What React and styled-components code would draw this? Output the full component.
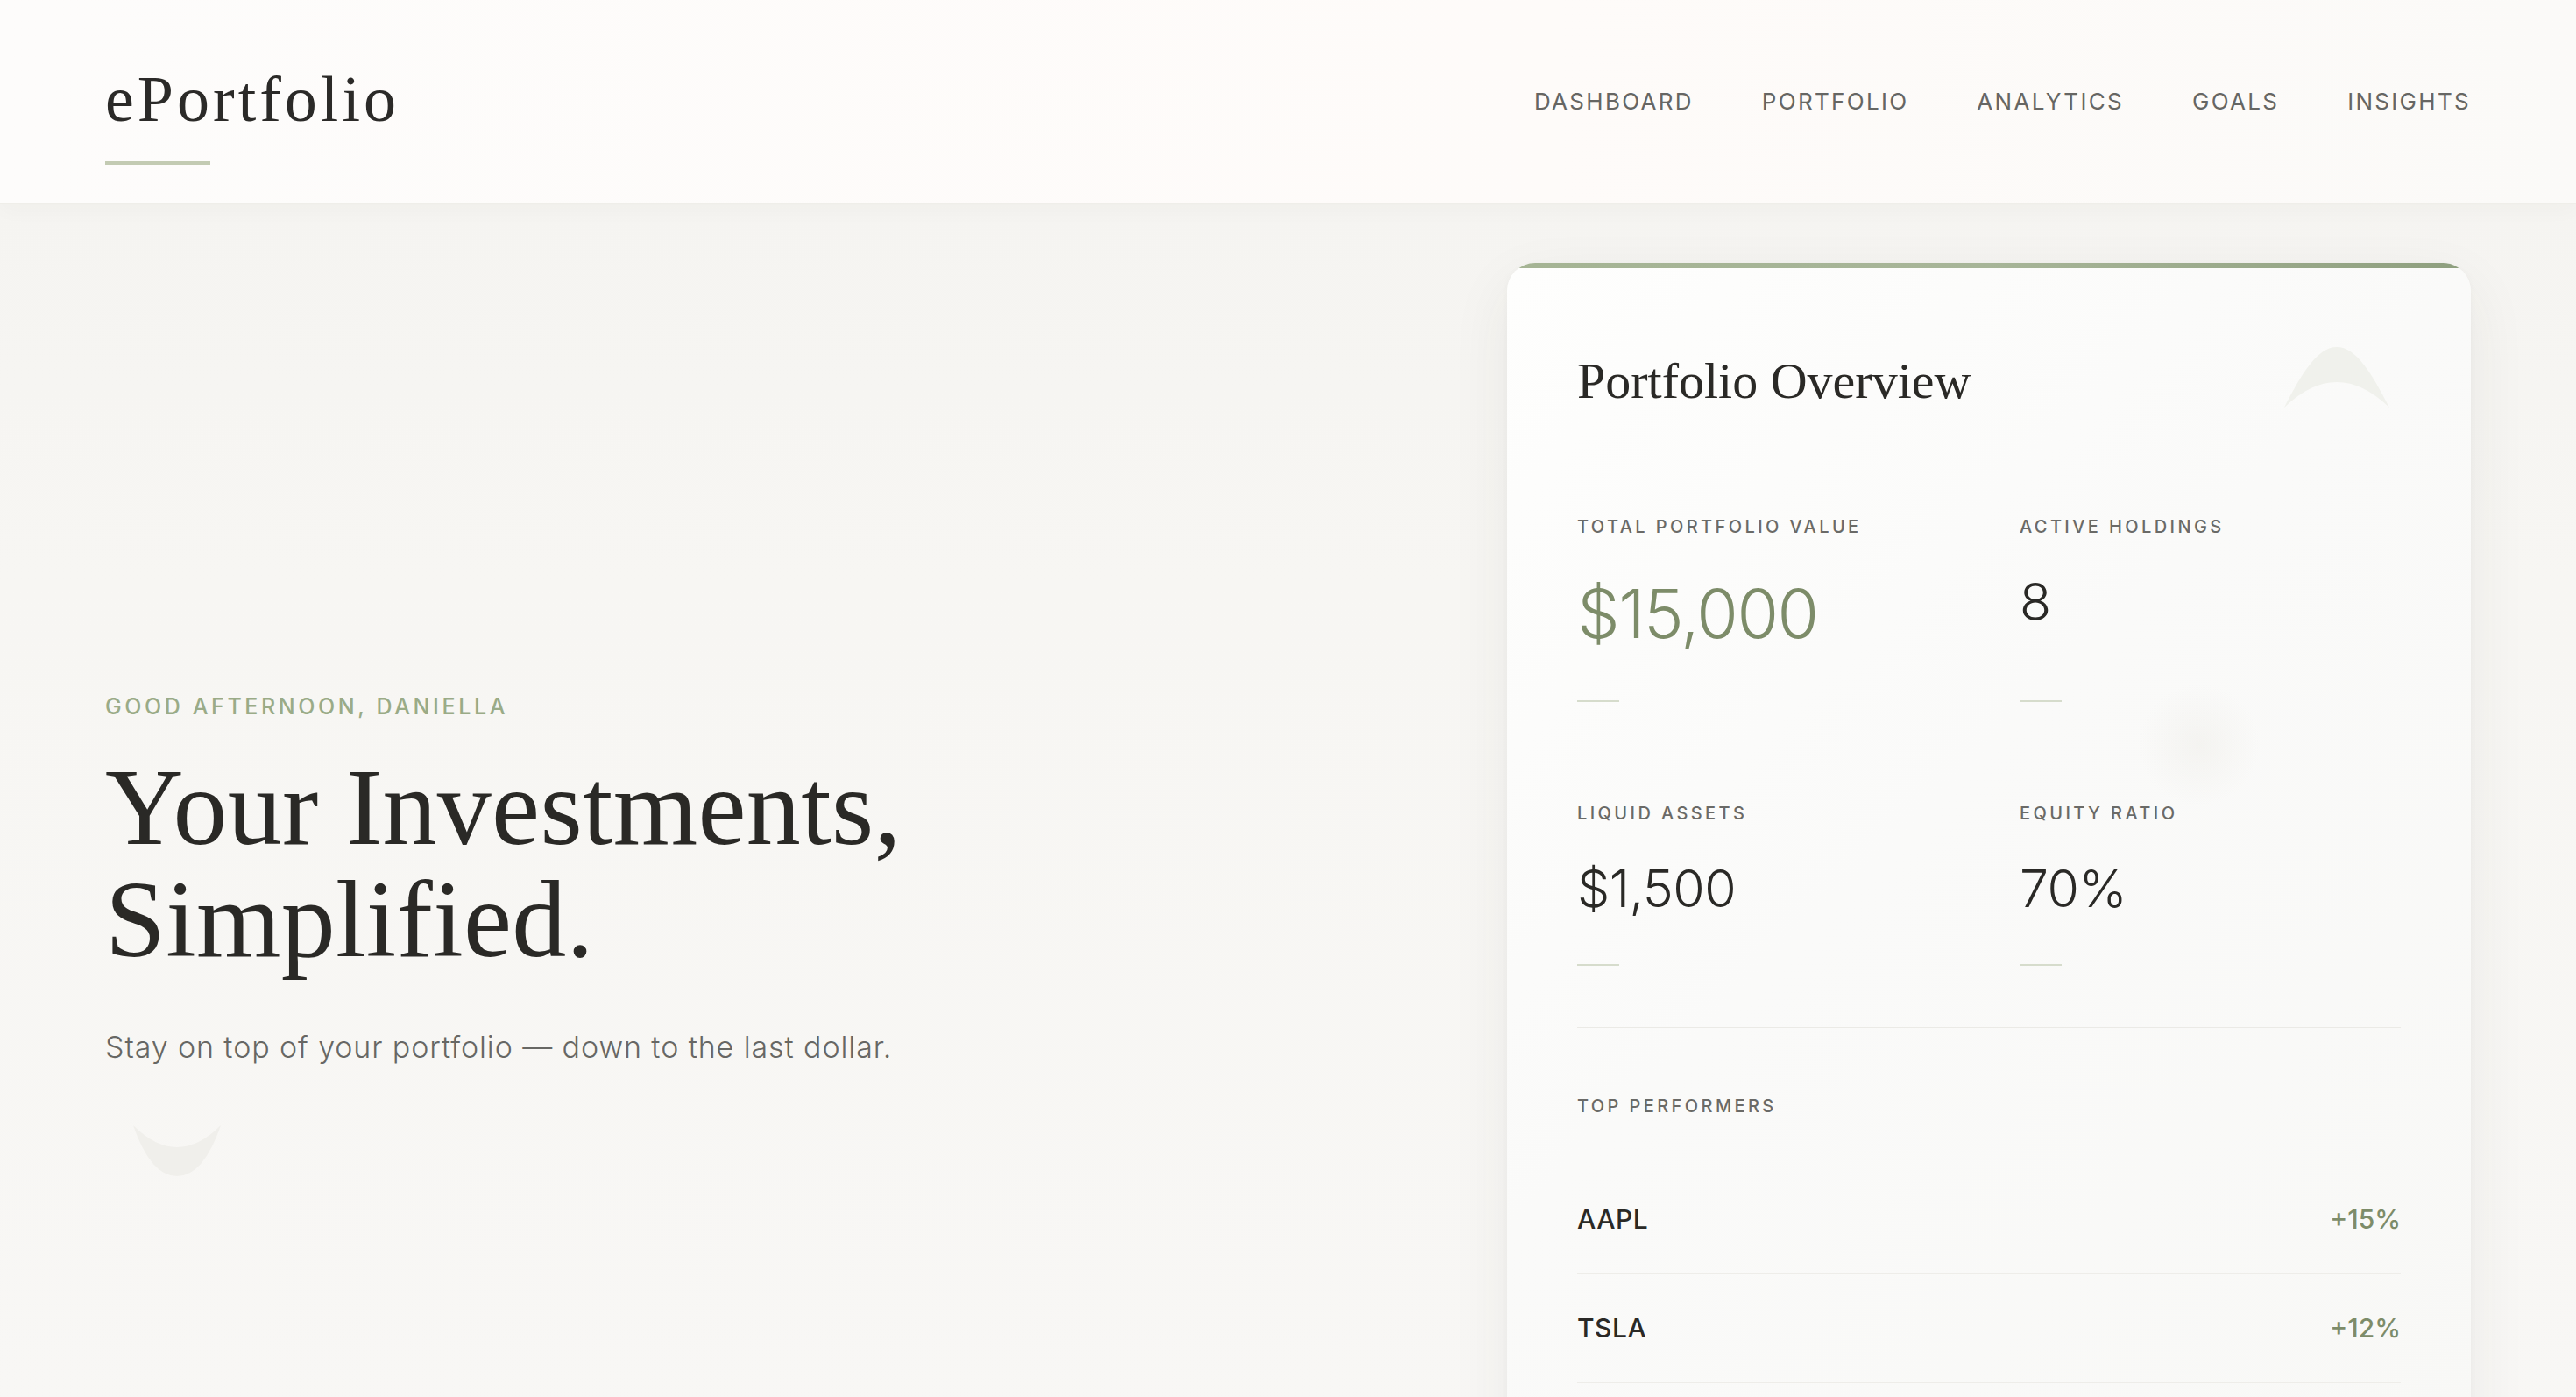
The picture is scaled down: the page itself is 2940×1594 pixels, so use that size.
import React from 'react'
import styled, { createGlobalStyle } from 'styled-components'

const GlobalStyle = createGlobalStyle`
  * { box-sizing: border-box; }
  html, body { margin: 0; padding: 0; }
  body {
    background: #f6f5f2;
    font-family: Inter, "Noto Sans", sans-serif;
    color: #2a2a2a;
  }
`

const navItems = ['Dashboard', 'Portfolio', 'Analytics', 'Goals', 'Insights']

const stats = [
  { label: 'Total Portfolio Value', value: '$15,000', big: true },
  { label: 'Active Holdings', value: '8' },
  { label: 'Liquid Assets', value: '$1,500' },
  { label: 'Equity Ratio', value: '70%' },
]

const performers = [
  { ticker: 'AAPL', change: '+15%' },
  { ticker: 'TSLA', change: '+12%' },
]

function App() {
  return (
    <Page>
      <GlobalStyle />
      <Header>
        <Brand>
          <Logo>ePortfolio</Logo>
          <LogoRule />
        </Brand>
        <Nav>
          {navItems.map(item => (
            <NavLink key={item}>{item}</NavLink>
          ))}
        </Nav>
      </Header>

      <Hero>
        <Intro>
          <Greeting>Good afternoon, Daniella</Greeting>
          <Headline>
            Your Investments,
            <br />
            Simplified.
          </Headline>
          <Lead>Stay on top of your portfolio — down to the last dollar.</Lead>
          <Smile viewBox="0 0 100 58">
            <path d="M0 0 Q50 50 100 0 Q80 58 50 58 Q20 58 0 0 Z" />
          </Smile>
        </Intro>

        <Card>
          <Arch viewBox="0 0 120 69">
            <path d="M0 69 Q60 11 120 69 C100 30 82 0 60 0 C38 0 20 30 0 69 Z" />
          </Arch>
          <Glow />
          <CardTitle>Portfolio Overview</CardTitle>
          <StatGrid>
            {stats.map(s => (
              <Stat key={s.label}>
                <StatLabel>{s.label}</StatLabel>
                <StatValue $big={s.big}>{s.value}</StatValue>
                <StatRule />
              </Stat>
            ))}
          </StatGrid>
          <Performers>
            <StatLabel>Top Performers</StatLabel>
            <PerformerList>
              {performers.map(p => (
                <PerformerRow key={p.ticker}>
                  <Ticker>{p.ticker}</Ticker>
                  <Change>{p.change}</Change>
                </PerformerRow>
              ))}
            </PerformerList>
          </Performers>
        </Card>
      </Hero>
    </Page>
  )
}

export default App

const Page = styled.div`
  min-height: 100vh;
  background: linear-gradient(180deg, #f4f3f0 0%, #f7f6f3 40%, #f8f7f5 100%);
  overflow: hidden;
`

const Header = styled.header`
  height: 232px;
  padding: 76px 120px 0;
  display: flex;
  justify-content: space-between;
  align-items: flex-start;
  background: linear-gradient(90deg, #fdfcfb 0%, #fefbf9 60%, #fbfaf8 100%);
  box-shadow: 0 1px 0 #efeee9, 0 6px 24px rgba(60, 50, 30, 0.03);
  position: relative;
  z-index: 1;
`

const Brand = styled.div`
  display: flex;
  flex-direction: column;
`

const Logo = styled.div`
  font-family: "Liberation Serif", "DejaVu Serif", serif;
  font-size: 74px;
  line-height: 74px;
  letter-spacing: 4px;
  color: #2b2a28;
`

const LogoRule = styled.div`
  width: 120px;
  height: 4px;
  margin-top: 34px;
  background: #c3cbb3;
`

const Nav = styled.nav`
  display: flex;
  gap: 78px;
  margin-top: 24px;
`

const NavLink = styled.a`
  font-size: 26px;
  line-height: 31px;
  letter-spacing: 2.3px;
  text-transform: uppercase;
  color: #666663;
  cursor: pointer;
`

const Hero = styled.main`
  display: grid;
  grid-template-columns: 1fr 1100px;
  padding: 68px 120px 0;
  position: relative;
`

const Intro = styled.section`
  padding-top: 491px;
  position: relative;
`

const Greeting = styled.div`
  font-size: 25px;
  line-height: 30px;
  font-weight: 500;
  letter-spacing: 3.6px;
  text-transform: uppercase;
  color: #9aab87;
`

const Headline = styled.h1`
  margin: 37px 0 0;
  font-family: "Liberation Serif", "DejaVu Serif", serif;
  font-weight: 400;
  font-size: 124px;
  line-height: 128px;
  letter-spacing: 0.3px;
  color: #2a2926;
`

const Lead = styled.p`
  margin: 55px 0 0;
  font-size: 34px;
  line-height: 51px;
  font-weight: 300;
  letter-spacing: 0.9px;
  color: #676764;
`

const Smile = styled.svg`
  position: absolute;
  left: 32px;
  top: 984px;
  width: 100px;
  height: 58px;
  fill: #f0efeb;
`

const Card = styled.section`
  position: relative;
  overflow: hidden;
  border-radius: 32px;
  padding: 100px 80px 80px;
  background: linear-gradient(135deg, #fefefd 0%, #fafaf9 45%, #f8f8f6 100%);
  box-shadow: 0 24px 70px rgba(60, 55, 40, 0.07), 0 2px 8px rgba(60, 55, 40, 0.03);

  &::before {
    content: "";
    position: absolute;
    top: 0;
    left: 0;
    right: 0;
    height: 6px;
    background: linear-gradient(90deg, #a5b494 0%, #a7b598 50%, #8e9f7e 100%);
  }
`

const Arch = styled.svg`
  position: absolute;
  top: 96px;
  right: 93px;
  width: 120px;
  height: 69px;
  fill: #f0f1ec;
`

const Glow = styled.div`
  position: absolute;
  top: 480px;
  right: 240px;
  width: 140px;
  height: 140px;
  border-radius: 50%;
  background: radial-gradient(circle, rgba(240, 239, 235, 0.6) 0%, rgba(244, 243, 240, 0) 70%);
`

const CardTitle = styled.h2`
  position: relative;
  margin: 0 0 119px;
  font-family: "Liberation Serif", "DejaVu Serif", serif;
  font-weight: 400;
  font-size: 58px;
  line-height: 70px;
  color: #2a2926;
`

const StatGrid = styled.div`
  position: relative;
  display: grid;
  grid-template-columns: 1fr 1fr;
  column-gap: 70px;
  row-gap: 115px;
`

const Stat = styled.div`
  display: flex;
  flex-direction: column;
`

const StatLabel = styled.div`
  font-size: 20px;
  line-height: 24px;
  font-weight: 500;
  letter-spacing: 3.4px;
  text-transform: uppercase;
  color: #6a6a67;
`

const StatValue = styled.div`
  margin-top: 39px;
  margin-bottom: 51px;
  font-size: ${p => (p.$big ? '77px' : '59px')};
  line-height: ${p => (p.$big ? '96px' : '70px')};
  font-weight: 300;
  letter-spacing: ${p => (p.$big ? '-1.5px' : '-0.5px')};
  color: ${p => (p.$big ? '#7d8c69' : '#2a2926')};
`

const StatRule = styled.div`
  margin-top: auto;
  width: 48px;
  height: 2px;
  background: #d6dccc;
`

const Performers = styled.div`
  position: relative;
  margin-top: 70px;
  padding-top: 77px;
  border-top: 1px solid #ebeae6;
`

const PerformerList = styled.div`
  margin-top: 56px;
`

const PerformerRow = styled.div`
  display: flex;
  justify-content: space-between;
  align-items: center;
  padding: 43px 0 44px;
  border-bottom: 1px solid #eeede9;
`

const Ticker = styled.span`
  font-size: 30px;
  line-height: 36px;
  font-weight: 500;
  letter-spacing: 0.5px;
  color: #2a2926;
`

const Change = styled.span`
  font-size: 30px;
  line-height: 36px;
  font-weight: 500;
  color: #7d8c69;
`
